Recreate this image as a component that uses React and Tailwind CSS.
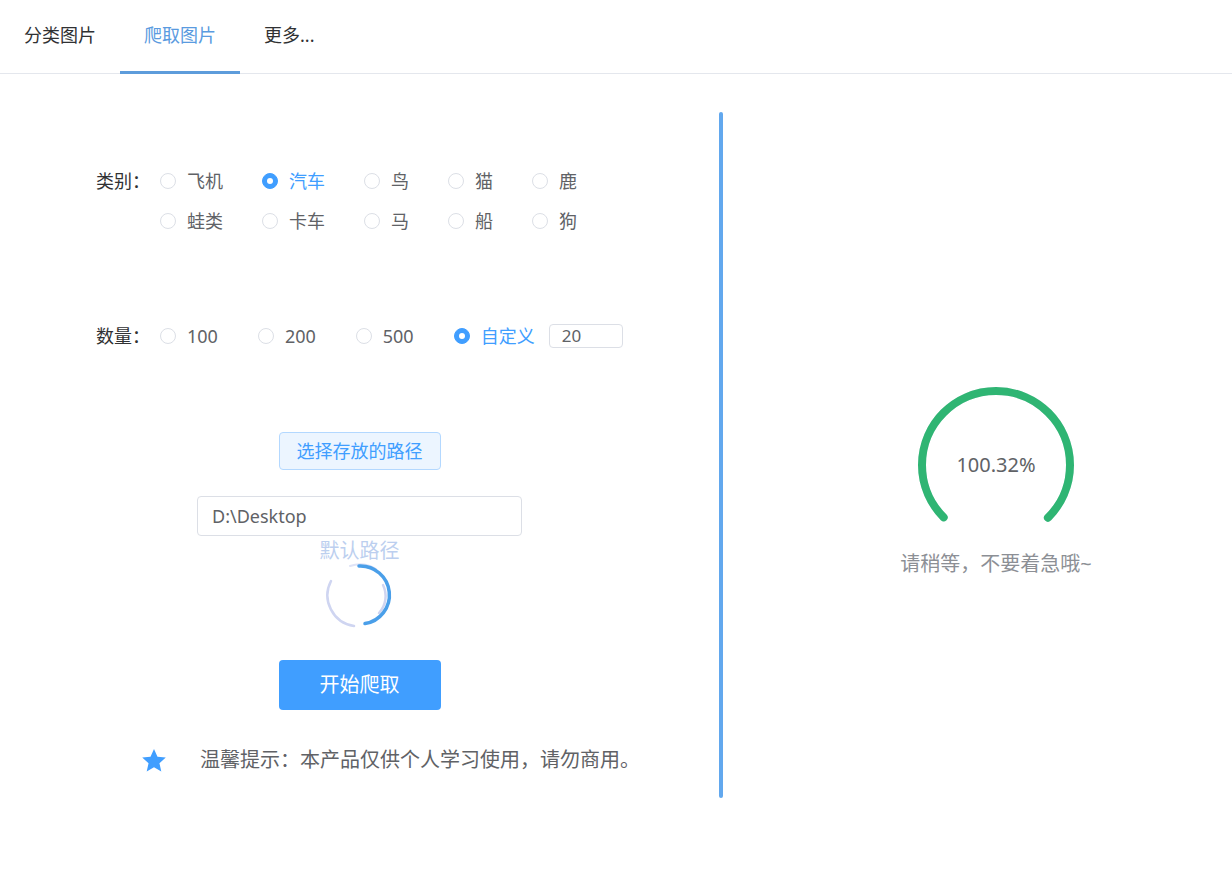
import React, { useState } from 'react';

const CATS = [
  ['飞机', '汽车', '鸟', '猫', '鹿'],
  ['蛙类', '卡车', '马', '船', '狗'],
];
const COUNTS = ['100', '200', '500'];

const Radio = ({ label, checked, mr = 'mr-[39px]' }) => (
  <label className={`flex items-center cursor-pointer ${mr}`}>
    <span
      className={`flex items-center justify-center w-4 h-4 rounded-full border ${
        checked ? 'bg-[#409eff] border-[#409eff]' : 'bg-white border-[#dcdfe6]'
      }`}
    >
      {checked && <span className="w-[6px] h-[6px] rounded-full bg-white" />}
    </span>
    <span className={`ml-[11px] text-[18px] ${checked ? 'text-[#409eff]' : 'text-[#606266]'}`}>{label}</span>
  </label>
);

const Spinner = () => (
  <svg width="68" height="68" viewBox="0 0 68 68" fill="none">
    {/* light outer arc, bottom to upper left */}
    <path d="M 28 65 A 31 31 0 0 1 5 20" stroke="#cfd5f1" strokeWidth="2.5" strokeLinecap="round" />
    {/* light top */}
    <path d="M 24 5 A 30 30 0 0 1 50 8" stroke="#dfe3f6" strokeWidth="2" strokeLinecap="round" />
    {/* light inner right arc */}
    <path d="M 57 24 A 25 25 0 0 1 53 52" stroke="#cfd5f1" strokeWidth="2.5" strokeLinecap="round" />
    {/* blue arc */}
    <path d="M 33 5 A 29 29 0 0 1 39 62.6" stroke="#4a9fe9" strokeWidth="3.5" strokeLinecap="round" />
  </svg>
);

const Dashboard = ({ percent }) => {
  const r = 74;
  const c = 2 * Math.PI * r;
  const arc = c * 0.75;
  const p = Math.min(percent, 100) / 100;
  return (
    <div className="relative w-[160px] h-[160px]">
      <svg width="160" height="160" viewBox="0 0 160 160" className="rotate-[135deg]">
        <circle cx="80" cy="80" r={r} fill="none" stroke="#e5e9f2" strokeWidth="8" strokeLinecap="round"
          strokeDasharray={`${arc} ${c}`} />
        <circle cx="80" cy="80" r={r} fill="none" stroke="#2fb573" strokeWidth="8" strokeLinecap="round"
          strokeDasharray={`${arc * p} ${c}`} />
      </svg>
      <div className="absolute inset-0 flex items-center justify-center text-[20px] text-[#606266]">
        {percent.toFixed(2)}%
      </div>
    </div>
  );
};

export default function App() {
  const [tab] = useState(1);
  const tabs = ['分类图片', '爬取图片', '更多...'];

  return (
    <div className="w-[1232px] h-[891px] bg-white font-['Noto_Sans','Noto_Sans_CJK_SC',sans-serif] overflow-hidden">
      {/* tabs */}
      <div className="flex h-[74px] border-b border-[#e4e7ed]">
        {tabs.map((t, i) => (
          <div
            key={t}
            className={`relative flex items-center px-6 text-[18px] ${
              i === tab ? 'text-[#5a9be0]' : 'text-[#303133]'
            }`}
          >
            <span className="-mt-[2px]">{t}</span>
            {i === tab && <span className="absolute left-0 right-0 -bottom-px h-[3px] bg-[#5d9cdb]" />}
          </div>
        ))}
      </div>

      <div className="flex">
        {/* left panel */}
        <div className="w-[719px] pt-[95px]">
          <div className="flex pl-[96px]">
            <div className="w-[64px] leading-6 text-[18px] text-[#303133]">类别：</div>
            <div className="flex flex-col gap-4">
              {CATS.map((row, ri) => (
                <div key={ri} className="flex h-6 items-center">
                  {row.map((c) => (
                    <Radio key={c} label={c} checked={c === '汽车'} />
                  ))}
                </div>
              ))}
            </div>
          </div>

          <div className="flex items-center h-[26px] pl-[96px] mt-[90px]">
            <div className="w-[64px] text-[18px] text-[#303133]">数量：</div>
            {COUNTS.map((n) => (
              <Radio key={n} label={n} checked={false} mr="mr-[40px]" />
            ))}
            <Radio label="自定义" checked mr="mr-[14px]" />
            <input
              defaultValue="20"
              className="w-[74px] h-6 px-[12px] border border-[#dcdfe6] rounded text-[17px] text-[#606266] outline-none"
            />
          </div>

          <div className="flex flex-col items-center">
            <button className="mt-[83px] w-[162px] h-[38px] rounded bg-[#ecf5ff] border border-[#b3d8ff] text-[#409eff] text-[18px]">
              选择存放的路径
            </button>
            <input
              defaultValue="D:\Desktop"
              className="mt-[26px] w-[325px] h-10 px-[14px] border border-[#dcdfe6] rounded text-[18px] text-[#606266] outline-none"
            />
            <div className="mt-[5px] leading-5 text-[20px] text-[#bccfef]">默认路径</div>
            <Spinner />
            <button className="mt-[31px] w-[162px] h-[50px] rounded bg-[#409eff] text-white text-[20px]">
              开始爬取
            </button>
          </div>

          <div className="flex items-center h-7 mt-[36px] pl-[142px]">
            <svg width="24" height="24" viewBox="1 1 22 21" fill="#409eff">
              <path d="M12 1.5l3.2 7.1 7.6.7-5.8 5.1 1.7 7.6L12 18.1 5.3 22l1.7-7.6L1.2 9.3l7.6-.7z" />
            </svg>
            <span className="ml-[34px] text-[20px] text-[#606266]">温馨提示：本产品仅供个人学习使用，请勿商用。</span>
          </div>
        </div>

        {/* divider */}
        <div className="mt-[38px] w-1 h-[686px] rounded-full bg-[#62a8ee]" />

        {/* right panel */}
        <div className="flex-1 flex flex-col items-center pl-[37px] pt-[311px]">
          <Dashboard percent={100.32} />
          <div className="mt-[5px] leading-7 text-[20px] text-[#8c8f95]">请稍等，不要着急哦~</div>
        </div>
      </div>
    </div>
  );
}
